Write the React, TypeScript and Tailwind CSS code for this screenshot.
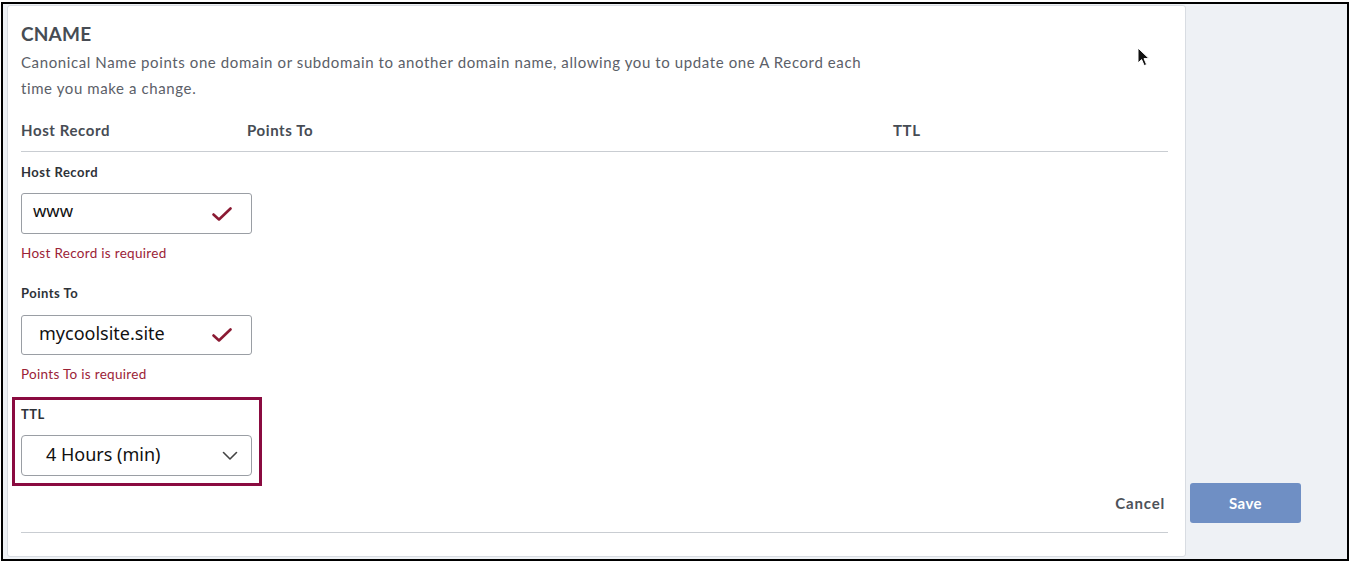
import React from "react";

const uiFont = { fontFamily: "Lato, 'Open Sans', sans-serif" } as React.CSSProperties;
const sysFont = { fontFamily: "'Noto Sans', 'Open Sans', sans-serif" } as React.CSSProperties;

function Check() {
  return (
    <svg width="20" height="16" viewBox="0 0 20 16" className="shrink-0">
      <path d="M1.5 8.5 L7 13.5 L18.5 2.5" fill="none" stroke="#8b1a33" strokeWidth="2.6" strokeLinecap="round" strokeLinejoin="round" />
    </svg>
  );
}

function Chevron() {
  return (
    <svg width="16" height="10" viewBox="0 0 16 10" className="shrink-0">
      <path d="M1.5 1.5 L8 8 L14.5 1.5" fill="none" stroke="#444" strokeWidth="1.6" strokeLinecap="round" strokeLinejoin="round" />
    </svg>
  );
}

function Cursor() {
  return (
    <svg width="14" height="20" viewBox="0 0 14 20" className="absolute left-[1137px] top-[47px]">
      <path d="M1 1 L1 16 L4.6 12.6 L7.2 18.6 L9.6 17.6 L7 11.6 L12 11.6 Z" fill="#111" stroke="#fff" strokeWidth="1" strokeLinejoin="round" />
    </svg>
  );
}

export default function App() {
  return (
    <div className="relative w-[1352px] h-[563px] bg-white pt-[2px] pl-[1px]" style={uiFont}>
      <div className="w-[1348px] h-[559px] border-2 border-black bg-[#eef1f5] flex items-start pl-[4px] pt-[1px]">
        {/* Card */}
        <div className="w-[1179px] h-[552px] bg-white border border-[#d8dce2] rounded-[3px] pl-[13px] pr-[17px] pt-[14px] flex flex-col">
          <div className="h-[28px] flex items-center text-[19px] font-bold text-[#474c54] tracking-[0.2px]">CNAME</div>
          <div className="w-[864px] text-[15px] leading-[26px] text-[#5b6068] mt-[1px] tracking-[0.6px]">
            Canonical Name points one domain or subdomain to another domain name, allowing you to update one A Record each time you make a change.
          </div>
          <div className="h-[51px] flex items-center border-b border-[#c9cdd2] text-[15px] font-bold text-[#474c54] pt-[8px] tracking-[0.6px]">
            <div className="w-[226px]">Host Record</div>
            <div className="w-[646px]">Points To</div>
            <div>TTL</div>
          </div>
          <div className="mt-[12px] h-[18px] flex items-center text-[13px] font-bold text-[#2e3238] tracking-[0.5px]">Host Record</div>
          <div className="mt-[11px] w-[231px] h-[41px] border border-[#9a9ea4] rounded-[3px] flex items-center justify-between pl-[11px] pr-[19px]">
            <span className="text-[17px] text-[#111] -mt-[6px]" style={sysFont}>www</span>
            <Check />
          </div>
          <div className="mt-[10px] h-[18px] flex items-center text-[13.5px] text-[#9b2337] tracking-[0.3px]">Host Record is required</div>
          <div className="mt-[23px] h-[18px] flex items-center text-[13px] font-bold text-[#2e3238] tracking-[0.5px]">Points To</div>
          <div className="mt-[12px] w-[231px] h-[40px] border border-[#9a9ea4] rounded-[3px] flex items-center justify-between pl-[17px] pr-[19px]">
            <span className="text-[18px] text-[#111] -mt-[4px]" style={sysFont}>mycoolsite.site</span>
            <Check />
          </div>
          <div className="mt-[10px] h-[18px] flex items-center text-[13.5px] text-[#9b2337] tracking-[0.3px]">Points To is required</div>
          <div className="-ml-[9px] mt-[14px] w-[250px] h-[89px] border-[3px] border-[#8a0b40] pl-[6px] pt-[6px]">
            <div className="h-[18px] flex items-center text-[13px] font-bold text-[#2e3238] tracking-[0.5px]">TTL</div>
            <div className="mt-[11px] w-[231px] h-[41px] border border-[#9a9ea4] rounded-[4px] flex items-center justify-between pl-[24px] pr-[13px]">
              <span className="text-[18px] text-[#111] -mt-[2px]" style={sysFont}>4 Hours (min)</span>
              <Chevron />
            </div>
          </div>
          <div className="flex justify-end h-[36px] items-center -mt-[1px]">
            <span className="text-[15px] font-bold text-[#4d5259] mr-[3px] tracking-[0.8px]">Cancel</span>
          </div>
          <div className="mt-[11px] border-b border-[#c9cdd2]" />
        </div>
        {/* Right column */}
        <div className="pl-[4px] pt-[478px]">
          <button className="w-[111px] h-[40px] rounded-[3px] bg-[#6f8fc4] text-white text-[15px] font-bold tracking-[0.4px]">Save</button>
        </div>
      </div>
      <Cursor />
    </div>
  );
}
